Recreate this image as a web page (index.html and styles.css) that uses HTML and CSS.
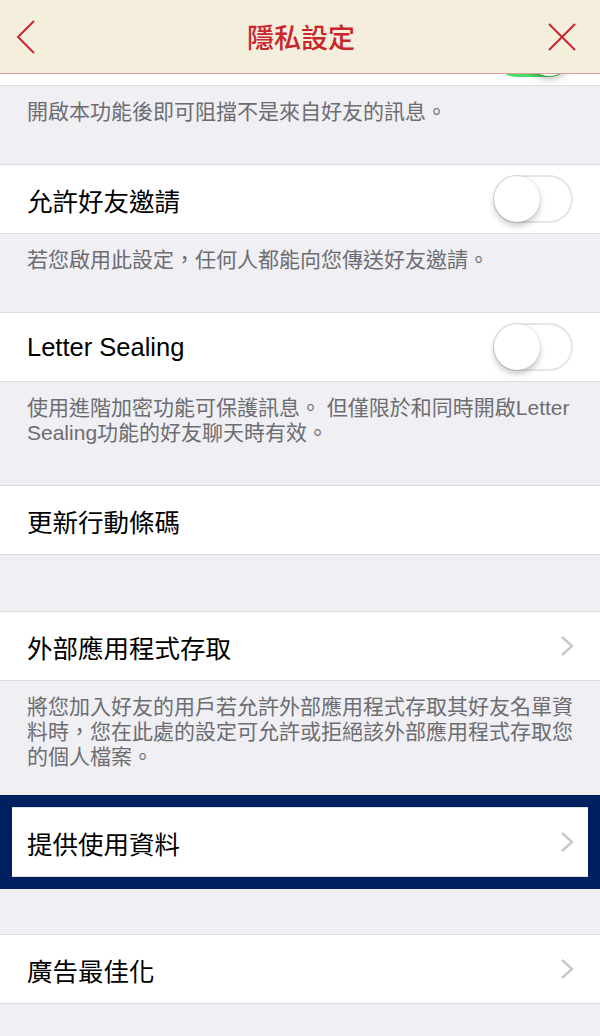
FILE: index.html
```html
<!DOCTYPE html>
<html lang="zh-Hant">
<head>
<meta charset="utf-8">
<title>隱私設定</title>
<link rel="stylesheet" href="styles.css">
</head>
<body>
<header class="header">
  <svg class="nav-icon" width="40" height="40" viewBox="0 0 40 40"><polyline points="26,4 10,20 26,36" fill="none" stroke="#c9252c" stroke-width="2"/></svg>
  <h1 class="title">隱私設定</h1>
  <svg class="nav-icon" width="40" height="40" viewBox="0 0 40 40"><path d="M7 7 L33 33 M33 7 L7 33" fill="none" stroke="#c9252c" stroke-width="2"/></svg>
</header>
<div class="partial"><div class="toggle on"><span class="knob"></span></div></div>
<p class="desc">開啟本功能後即可阻擋不是來自好友的訊息。</p>
<div class="row"><span class="label">允許好友邀請</span><div class="toggle"><span class="knob"></span></div></div>
<p class="desc">若您啟用此設定，任何人都能向您傳送好友邀請。</p>
<div class="row"><span class="label">Letter Sealing</span><div class="toggle"><span class="knob"></span></div></div>
<p class="desc">使用進階加密功能可保護訊息。 但僅限於和同時開啟Letter Sealing功能的好友聊天時有效。</p>
<div class="row"><span class="label">更新行動條碼</span></div>
<div class="gap"></div>
<div class="row"><span class="label">外部應用程式存取</span><svg class="chev" width="14" height="22" viewBox="0 0 14 22"><polyline points="2,2 12,11 2,20" fill="none" stroke="#c7c7cc" stroke-width="2.4"/></svg></div>
<p class="desc desc-tight">將您加入好友的用戶若允許外部應用程式存取其好友名單資料時，您在此處的設定可允許或拒絕該外部應用程式存取您的個人檔案。</p>
<div class="highlight">
  <div class="row"><span class="label">提供使用資料</span><svg class="chev" width="14" height="22" viewBox="0 0 14 22"><polyline points="2,2 12,11 2,20" fill="none" stroke="#c7c7cc" stroke-width="2.4"/></svg></div>
</div>
<div class="gap"></div>
<div class="row"><span class="label">廣告最佳化</span><svg class="chev" width="14" height="22" viewBox="0 0 14 22"><polyline points="2,2 12,11 2,20" fill="none" stroke="#c7c7cc" stroke-width="2.4"/></svg></div>
</body>
</html>
```
FILE: styles.css
```css
* { box-sizing: border-box; }
body {
  margin: 0;
  background: #efeff4;
  font-family: "Liberation Sans", "Noto Sans CJK TC", sans-serif;
  color: #000;
}
.header {
  height: 74px;
  background: #f4eedc;
  border-bottom: 1px solid #d9a09c;
  display: flex;
  align-items: center;
  justify-content: space-between;
  padding: 0 18px 0 8px;
}
.nav-icon { display: block; }
.title {
  margin: 0 0 0 12px;
  font-size: 27px;
  font-weight: 500;
  color: #c9252c;
  letter-spacing: 0;
}
.partial {
  height: 12px;
  background: #fff;
  border-bottom: 1px solid #dcdce0;
  overflow: hidden;
  display: flex;
  justify-content: flex-end;
  padding-right: 27px;
}
.partial .toggle { margin-top: -45px; }
.desc {
  margin: 0;
  padding: 13px 20px 40px 27px;
  font-size: 21px;
  line-height: 25px;
  color: #6d6d72;
}
.desc-tight { padding-bottom: 38px; }
.row {
  height: 70px;
  background: #fff;
  border-top: 1px solid #dcdce0;
  border-bottom: 1px solid #dcdce0;
  display: flex;
  align-items: center;
  justify-content: space-between;
  padding: 0 27px;
}
.label {
  font-size: 25.5px;
  color: #000;
}
.gap { height: 56px; }
.toggle {
  position: relative;
  width: 80px;
  height: 48px;
  border-radius: 24px;
  background: #fff;
  box-shadow: inset 0 0 0 2px #e6e6ea;
  flex: none;
}
.toggle .knob {
  position: absolute;
  top: 1px;
  left: 1px;
  width: 46px;
  height: 46px;
  border-radius: 50%;
  background: #fff;
  box-shadow: 0 4px 6px rgba(0,0,0,0.22), 0 0 0 1px rgba(0,0,0,0.06);
}
.toggle.on { background: #4cd964; box-shadow: none; }
.toggle.on .knob { left: 33px; }
.chev { display: block; flex: none; margin-right: -1px; }
.highlight {
  position: relative;
}
.highlight::after {
  content: "";
  position: absolute;
  top: -12px;
  bottom: -12px;
  left: 0;
  right: 0;
  border: 12px solid #012060;
  pointer-events: none;
}
.highlight + .gap { height: 57px; }
```
